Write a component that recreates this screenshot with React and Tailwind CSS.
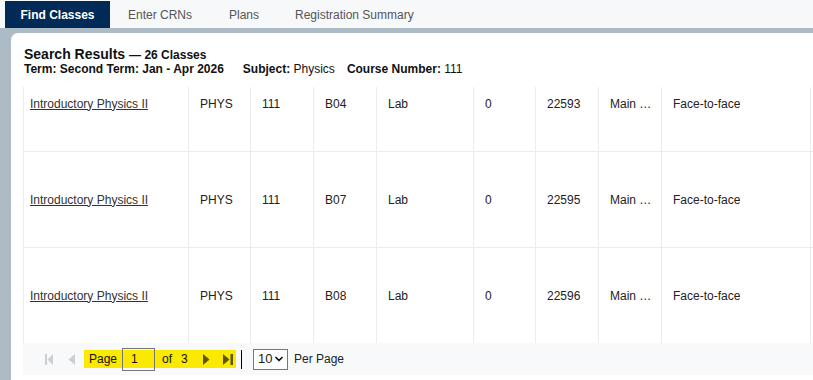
import { ChevronDown } from "lucide-react";

const rows = [
  { sec: "B04", crn: "22593" },
  { sec: "B07", crn: "22595" },
  { sec: "B08", crn: "22596" },
];

const cols = "grid grid-cols-[165px_62px_63px_63px_97px_62px_63px_63px_149px_1fr]";

function Cell({ children, first }) {
  return (
    <div className={`flex items-center border-r border-[#ececec] ${first ? "pl-[6px]" : "pl-[11px]"} pr-[4px] overflow-hidden whitespace-nowrap`}>
      {children}
    </div>
  );
}

function FirstIcon({ color }) {
  return (
    <svg width="8" height="11" viewBox="0 0 8 11">
      <rect x="0" y="0" width="2" height="11" fill={color} />
      <path d="M8 0 L2.5 5.5 L8 11 Z" fill={color} />
    </svg>
  );
}

function LastIcon({ color }) {
  return (
    <svg width="10" height="11" viewBox="0 0 10 11">
      <path d="M0 0 L6.5 5.5 L0 11 Z" fill={color} />
      <rect x="7.5" y="0" width="2.5" height="11" fill={color} />
    </svg>
  );
}

export default function App() {
  return (
    <div className="w-[813px] h-[380px] overflow-hidden bg-white font-['Liberation_Sans',Arial,sans-serif] text-[12px] text-[#222]">
      {/* Tabs */}
      <div className="h-[28px] bg-[#f7f8fa] flex pl-[5px] pt-[1px]">
        <div className="w-[105px] bg-[#012a56] text-white font-bold flex items-center justify-center">Find Classes</div>
        <div className="w-[100px] text-[#555] flex items-center justify-center">Enter CRNs</div>
        <div className="w-[85px] text-[#555] flex items-center pl-[19px]">Plans</div>
        <div className="text-[#555] flex items-center">Registration Summary</div>
      </div>

      <div className="bg-[#adbbc7] pl-[11px] pt-[5px] h-[352px]">
        <div className="bg-white rounded-tl-[7px] h-full">
          <div className="pl-[13px] pt-[13px]">
            <div className="h-[16px] leading-[16px] font-bold text-[14px] text-[#111]">
              Search Results <span className="text-[12px]">— 26 Classes</span>
            </div>
            <div className="h-[14px] leading-[14px] text-[#111] flex">
              <span className="font-bold">Term: Second Term: Jan - Apr 2026</span>
              <span className="ml-[19px]"><span className="font-bold">Subject:</span> Physics</span>
              <span className="ml-[12px]"><span className="font-bold">Course Number:</span> 111</span>
            </div>
          </div>

          <div className="ml-[12px] mt-[11px] h-[256px] overflow-hidden border-l border-[#ececec]">
            <div className="-mt-[32px] pt-[1px]">
              {rows.map((r) => (
                <div key={r.sec} className={`${cols} h-[96px] border-b border-[#ececec]`}>
                  <Cell first>
                    <a className="underline text-[#333]">Introductory Physics II</a>
                  </Cell>
                  <Cell>PHYS</Cell>
                  <Cell>111</Cell>
                  <Cell>{r.sec}</Cell>
                  <Cell>Lab</Cell>
                  <Cell>0</Cell>
                  <Cell>{r.crn}</Cell>
                  <Cell>Main …</Cell>
                  <Cell>Face-to-face</Cell>
                  <div />
                </div>
              ))}
            </div>
          </div>

          {/* Pager */}
          <div className="ml-[12px] h-[32px] bg-[#f8f9fa] flex items-center pl-[22px]">
            <FirstIcon color="#cfcfcf" />
            <span className="ml-[15px] flex">
              <svg width="7" height="11" viewBox="0 0 7 11"><path d="M7 0 L0.5 5.5 L7 11 Z" fill="#cfcfcf" /></svg>
            </span>
            <div className="ml-[9px] h-[18px] w-[152px] bg-[#fbe900] flex items-center pl-[5px] text-[#111]">
              <span>Page</span>
              <div className="ml-[5px] w-[33px] h-[23px] border border-[#777] flex items-center pl-[8px]">1</div>
              <span className="ml-[7px]">of</span>
              <span className="ml-[9px]">3</span>
              <span className="ml-[15px] flex">
                <svg width="7" height="11" viewBox="0 0 7 11"><path d="M0 0 L6.5 5.5 L0 11 Z" fill="#5e5700" /></svg>
              </span>
              <span className="ml-[13px] flex"><LastIcon color="#5e5700" /></span>
            </div>
            <div className="ml-[5px] w-px h-[19px] bg-black" />
            <div className="ml-[11px] w-[35px] h-[21px] border border-[#777] bg-white flex items-center pl-[4px] gap-[1px] text-[13px] text-[#1a1a1a]">
              10
              <ChevronDown size={12} strokeWidth={3.5} className="text-[#111]" />
            </div>
            <span className="ml-[6px] text-[#222]">Per Page</span>
          </div>
        </div>
      </div>
    </div>
  );
}
